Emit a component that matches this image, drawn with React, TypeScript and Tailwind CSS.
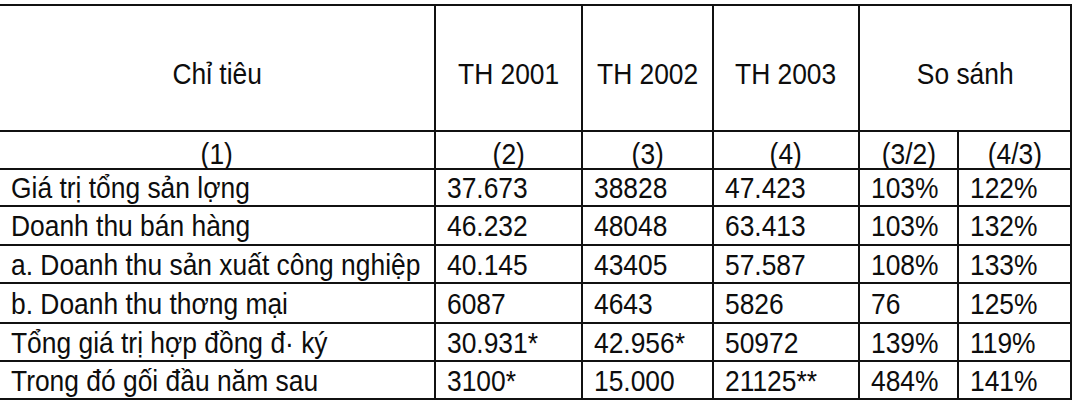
import React from "react";

const rows: string[][] = [
  ["Giá trị tổng sản lợng", "37.673", "38828", "47.423", "103%", "122%"],
  ["Doanh thu bán hàng", "46.232", "48048", "63.413", "103%", "132%"],
  ["a. Doanh thu sản xuất công nghiệp", "40.145", "43405", "57.587", "108%", "133%"],
  ["b. Doanh thu thơng mại", "6087", "4643", "5826", "76", "125%"],
  ["Tổng giá trị hợp đồng đ· ký", "30.931*", "42.956*", "50972", "139%", "119%"],
  ["Trong đó gối đầu năm sau", "3100*", "15.000", "21125**", "484%", "141%"],
];

function Center({ children, className = "" }: { children: React.ReactNode; className?: string }) {
  return (
    <div className={`bg-white flex items-center justify-center ${className}`}>
      <span className="inline-block scale-x-[0.91] whitespace-nowrap">{children}</span>
    </div>
  );
}

function Left({ children }: { children: React.ReactNode }) {
  return (
    <div className="bg-white flex items-center pl-[11px] pt-[2px] overflow-hidden">
      <span className="inline-block scale-x-[0.91] origin-left whitespace-nowrap">{children}</span>
    </div>
  );
}

export default function App() {
  return (
    <div className="w-[1080px] h-[407px] bg-white overflow-hidden font-['Liberation_Sans',Arial,sans-serif] text-[29px] leading-none text-[#0d0d0d]">
      <div className="mt-[4px] w-[1072px] bg-[#111111] pt-[2px] pr-[2px] pb-[2px] grid grid-cols-[434px_145px_129px_144px_97px_111px] grid-rows-[124px_36px_35px_37px_36px_38px_36px_36px] gap-[2px]">
        <Center className="pt-[13px]">Chỉ tiêu</Center>
        <Center className="pt-[13px]">TH 2001</Center>
        <Center className="pt-[13px]">TH 2002</Center>
        <Center className="pt-[13px]">TH 2003</Center>
        <Center className="pt-[13px] col-span-2">So sánh</Center>

        <Center className="pt-[8px]">(1)</Center>
        <Center className="pt-[8px]">(2)</Center>
        <Center className="pt-[8px]">(3)</Center>
        <Center className="pt-[8px]">(4)</Center>
        <Center className="pt-[8px]">(3/2)</Center>
        <Center className="pt-[8px]">(4/3)</Center>

        {rows.map((r, i) => (
          <React.Fragment key={i}>
            {r.map((c, j) => (
              <Left key={j}>{c}</Left>
            ))}
          </React.Fragment>
        ))}
      </div>
    </div>
  );
}
